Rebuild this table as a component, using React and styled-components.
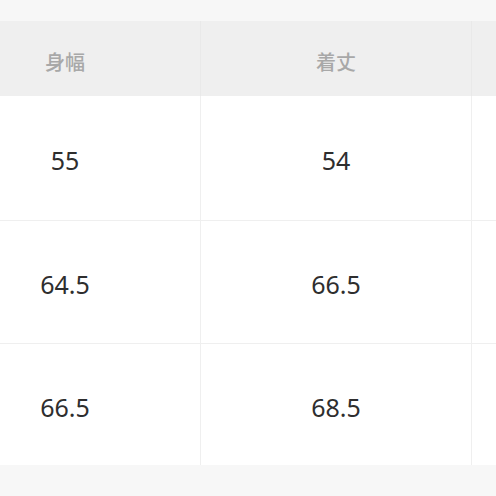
import styled, { createGlobalStyle } from "styled-components"

const GlobalStyle = createGlobalStyle`
  html, body {
    margin: 0;
    padding: 0;
    background: #f7f7f7;
    overflow: hidden;
  }
`

const Page = styled.div`
  width: 496px;
  height: 496px;
  overflow: hidden;
  padding-top: 21px;
  box-sizing: border-box;
`

const SizeTable = styled.div`
  display: grid;
  grid-template-columns: repeat(3, 271px);
  grid-template-rows: 75px 124px 123px 122px;
  margin-left: -70px;
  width: max-content;
  background: #fff;
`

const HeadCell = styled.div`
  box-sizing: border-box;
  display: flex;
  align-items: center;
  justify-content: center;
  background: #efefef;
  border-right: 1px solid #e9e9e9;
  font-family: "Noto Sans CJK JP", "Noto Sans", sans-serif;
  font-size: 20px;
  font-weight: 500;
  color: #a8a8a8;
  padding-top: 5px;
`

const Cell = styled.div`
  box-sizing: border-box;
  display: flex;
  align-items: center;
  justify-content: center;
  border-right: 1px solid #efefef;
  border-top: ${({ $first }) => ($first ? "none" : "1px solid #efefef")};
  font-family: "Noto Sans", sans-serif;
  font-size: 25px;
  color: #2e2e2e;
  padding-top: 4px;
`

// the third column runs off the right edge; its labels are not in view
const columns = ["身幅", "着丈", ""]

const rows = [
  ["55", "54", ""],
  ["64.5", "66.5", ""],
  ["66.5", "68.5", ""],
]

const App = () => (
  <>
    <GlobalStyle />
    <Page>
      <SizeTable>
        {columns.map((c, j) => (
          <HeadCell key={j}>{c}</HeadCell>
        ))}
        {rows.map((row, i) =>
          row.map((v, j) => (
            <Cell key={`${i}-${j}`} $first={i === 0}>
              {v}
            </Cell>
          ))
        )}
      </SizeTable>
    </Page>
  </>
)

export default App
